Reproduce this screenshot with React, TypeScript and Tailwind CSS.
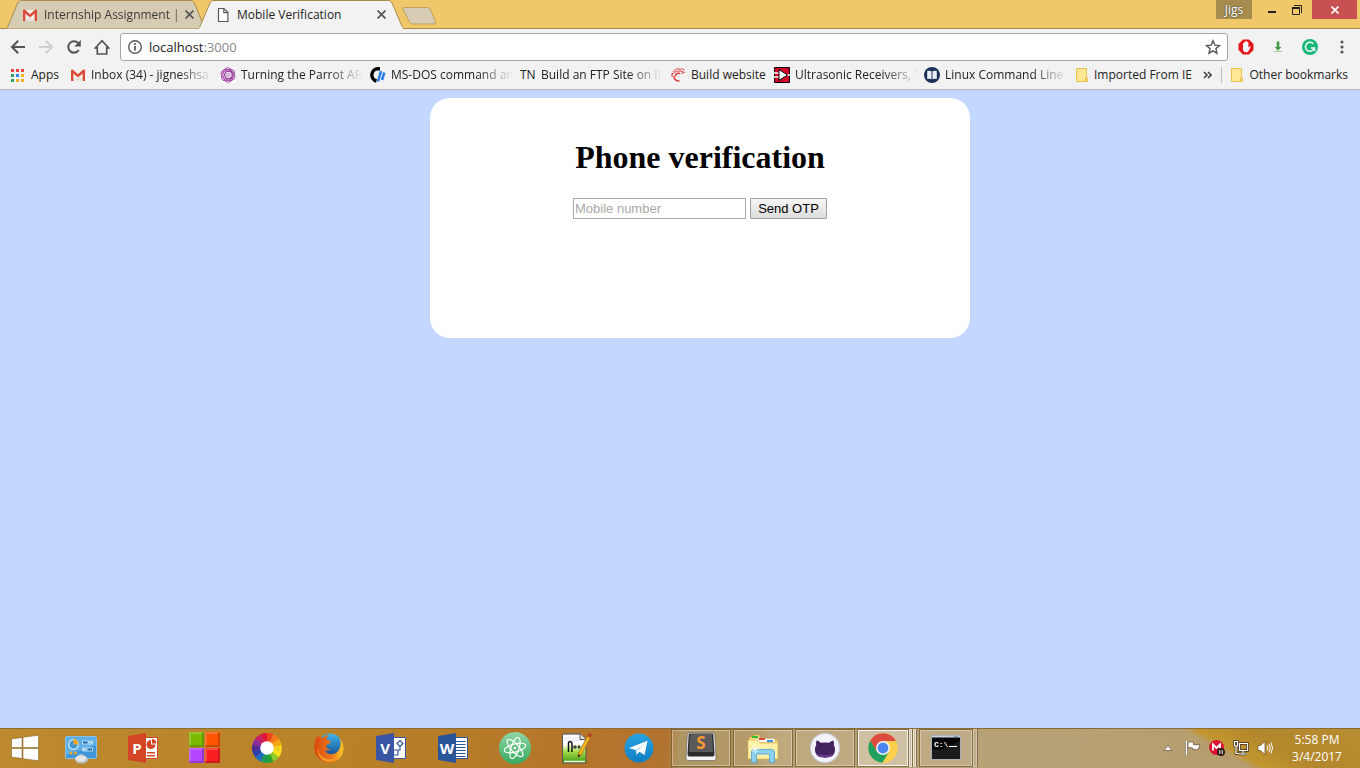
import React from "react";

type IconProps = { className?: string };

/* ---------- shared glyphs ---------- */

function GmailIcon({ className = "size-4" }: IconProps) {
  return (
    <svg viewBox="0 0 16 16" className={className} aria-hidden="true">
      <path d="M2 3h12v11H2z" fill="#f4f0ec" />
      <path d="M1 3.6v10.4h2.4V6.4L8 10.6l4.6-4.2V14H15V3.6c0-1-1.2-1.4-2-.8L8 7.2 3 2.8c-.8-.6-2-.2-2 .8z" fill="#dc4a3a" />
      <path d="M3.4 13.6 8 9.4l4.6 4.2z" fill="#e4ddd8" />
    </svg>
  );
}

function CloseIcon({ className = "size-2" }: IconProps) {
  return (
    <svg viewBox="0 0 8 8" className={className} aria-hidden="true">
      <path d="M.5.5l7 7M7.5.5l-7 7" stroke="currentColor" strokeWidth="1.6" fill="none" />
    </svg>
  );
}

function PageIcon() {
  return (
    <svg viewBox="0 0 16 16" className="size-4" aria-hidden="true">
      <path d="M3.5 1.5h5.4l4 4v9H3.5z" fill="#fff" stroke="#5a5a5a" strokeWidth="1.2" />
      <path d="M8.8 1.5v4.2H13" fill="none" stroke="#5a5a5a" strokeWidth="1.2" />
    </svg>
  );
}

function FolderIcon() {
  return (
    <svg viewBox="0 0 12 14" className="h-[14px] w-3 shrink-0" aria-hidden="true">
      <path d="M.5.5h10v9.5h1v3.5H.5z" fill="#ffe793" stroke="#e9c44c" />
      <path d="M9.5 13.5V10h1.5" fill="none" stroke="#e9c44c" />
    </svg>
  );
}

/* ---------- title bar ---------- */

type TabProps = { title: string; icon: React.ReactNode; active?: boolean };

function Tab({ title, icon, active = false }: TabProps) {
  return (
    <div
      className={
        active
          ? "relative z-10 -ml-2 flex h-[29px] w-[206px] items-center pr-[18px] pl-[17px]"
          : "relative flex h-[29px] w-[200px] items-center pr-3 pl-4"
      }
    >
      <svg viewBox="0 0 206 29" preserveAspectRatio="none" className="absolute inset-0 size-full" aria-hidden="true">
        <path
          d="M0 28.5Q1 28.5 1.500 27.500L12 3C13 1.5 14 .5 16 .5H190C192 .5 193 1.5 194 3L204.500 27.500Q205 28.5 206 28.5"
          fill={active ? "#f2f2f2" : "#d6ccb4"}
          stroke="#a98a4c"
        />
        {active && <path d="M1 28.5H205" stroke="#f2f2f2" strokeWidth="2" />}
      </svg>
      <span className="relative flex min-w-0 flex-1 items-center gap-[6px]">
        {icon}
        <span
          className={
            active
              ? "flex-1 text-xs whitespace-nowrap text-[#222]"
              : "flex-1 overflow-hidden mask-r-from-94% text-xs whitespace-nowrap text-[#3c3a34]"
          }
        >
          {title}
        </span>
      </span>
      <button type="button" aria-label={"Close " + title} className="relative ml-[2px] text-[#5a5a5a]">
        <CloseIcon className="size-[9px]" />
      </button>
    </div>
  );
}

function TitleBar() {
  return (
    <header className="flex h-[29px] items-start border-b border-[#a98a4c] bg-[#f0c869]">
      <div className="flex pl-[6px]">
        <Tab title="Internship Assignment | N" icon={<GmailIcon className="size-4 shrink-0" />} />
        <Tab title="Mobile Verification" icon={<PageIcon />} active />
        <button type="button" aria-label="New tab" className="mt-[7px] -ml-[2px] h-[18px] w-[34px]">
          <svg viewBox="0 0 34 18" className="size-full" aria-hidden="true">
            <path d="M2 .5h23.500q2 0 3 2l5 12.500q.5 2-1.500 2H10.500q-2 0-3-2L1 2.500Q.4.5 2 .5z" fill="#d6ccb4" stroke="#bf9f5c" />
          </svg>
        </button>
      </div>
      <div className="ml-auto flex h-[19px] items-stretch pr-[3px]">
        <button type="button" className="w-9 bg-[#a68d4f] text-xs leading-[18px] text-white [text-shadow:0_0_2px_#333]">
          Jigs
        </button>
        <button type="button" aria-label="Minimize" className="ml-[10px] flex w-5 items-center justify-center pt-1">
          <span className="h-[2px] w-2 bg-[#222]" />
        </button>
        <button type="button" aria-label="Restore" className="flex w-[30px] items-center justify-center">
          <svg viewBox="0 0 10 10" className="size-[10px]" aria-hidden="true">
            <path d="M.5 3h7v6.500h-7z" fill="none" stroke="#222" />
            <path d="M0 3h8" stroke="#222" strokeWidth="2" />
            <path d="M2 .5h7.500V8" fill="none" stroke="#222" />
          </svg>
        </button>
        <button type="button" aria-label="Close window" className="flex w-[45px] items-center justify-center bg-[#c75050] text-white">
          <CloseIcon />
        </button>
      </div>
    </header>
  );
}

/* ---------- toolbar ---------- */

type NavButtonProps = { label: string; d: string; faded?: boolean };

function NavButton({ label, d, faded = false }: NavButtonProps) {
  return (
    <button type="button" aria-label={label} className={faded ? "text-[#cfcfcf]" : "text-[#535353]"}>
      <svg viewBox="0 0 16 16" className="size-4" fill="none" stroke="currentColor" strokeWidth="2" aria-hidden="true">
        <path d={d} />
      </svg>
    </button>
  );
}

function Toolbar() {
  return (
    <div className="flex h-9 items-center bg-[#f2f2f2] pl-[10px]">
      <nav className="flex gap-3" aria-label="Navigation">
        <NavButton label="Back" d="M15 8H2.500M8.200 1.800 2 8l6.200 6.200" />
        <NavButton label="Forward" d="M1 8h12.500M7.800 1.800 14 8l-6.200 6.200" faded />
        <button type="button" aria-label="Reload" className="text-[#535353]">
          <svg viewBox="0 0 16 16" className="size-4" aria-hidden="true">
            <path d="M12.800 11A5.700 5.700 0 1 1 12.500 4.500" fill="none" stroke="currentColor" strokeWidth="2" />
            <path d="M14.800 1v6.500H8.300z" fill="currentColor" />
          </svg>
        </button>
        <button type="button" aria-label="Home" className="text-[#535353]">
          <svg viewBox="0 0 16 16" className="size-4" fill="none" stroke="currentColor" strokeWidth="1.700" aria-hidden="true">
            <path d="M3.300 8.800v6.200h9.400V8.800h1.800L8 1.700 1.500 8.800z" />
          </svg>
        </button>
      </nav>
      <div className="ml-[10px] flex h-7 flex-1 items-center rounded-[3px] border border-[#a6a6a6] bg-white px-[6px]">
        <svg viewBox="0 0 16 16" className="size-4 shrink-0" aria-hidden="true">
          <circle cx="8" cy="8" r="6.300" fill="none" stroke="#5a5a5a" strokeWidth="1.400" />
          <path d="M8 7v4.500M8 4.200v1.800" stroke="#5a5a5a" strokeWidth="1.800" />
        </svg>
        <div className="ml-[6px] flex-1 text-[13px] leading-5 text-[#222]">
          localhost<span className="text-[#888]">:3000</span>
        </div>
        <button type="button" aria-label="Bookmark this page">
          <svg viewBox="0 0 16 16" className="size-4" aria-hidden="true">
            <path d="M8 1.800l1.800 4.300 4.700.4-3.600 3.100 1.100 4.600L8 11.800l-4 2.400 1.100-4.600L1.500 6.500l4.700-.4z" fill="none" stroke="#5a5a5a" strokeWidth="1.400" />
          </svg>
        </button>
      </div>
      <div className="flex items-center gap-4 pr-[10px] pl-[10px]">
        <button type="button" aria-label="Ad blocker">
          <svg viewBox="0 0 16 16" className="size-4" aria-hidden="true">
            <path d="M5 .5h6L15.500 5v6L11 15.500H5L.5 11V5z" fill="#e4151c" />
            <path d="M5 8V4.200q.7-.9 1.300 0V3q.7-.9 1.400 0v-.7q.7-.8 1.400 0V3.500q.7-.8 1.300 0V8.700l1.300-1.500q1.200-.3.900.8L10.400 12.300Q9.500 13.500 7.700 13.300 5 13 5 10z" fill="#fff" />
          </svg>
        </button>
        <button type="button" aria-label="Downloads">
          <svg viewBox="0 0 16 16" className="size-4" aria-hidden="true">
            <path d="M6.700 2.500h2.600V8h2L8 11.700 4.700 8h2z" fill="#449a44" />
            <path d="M4 12.500h8" stroke="#9fc99f" />
          </svg>
        </button>
        <button type="button" aria-label="Grammar check">
          <svg viewBox="0 0 16 16" className="size-4" aria-hidden="true">
            <circle cx="8" cy="8" r="8" fill="#15b877" />
            <path d="M11.300 4.800A4.500 4.500 0 1 0 12.300 9" fill="none" stroke="#fff" strokeWidth="1.500" />
            <path d="M8.800 9h3.700v3.200" fill="none" stroke="#fff" strokeWidth="1.500" />
          </svg>
        </button>
        <button type="button" aria-label="Menu">
          <svg viewBox="0 0 16 16" className="size-4 text-[#5a5a5a]" fill="currentColor" aria-hidden="true">
            <circle cx="8" cy="3" r="1.600" />
            <circle cx="8" cy="8" r="1.600" />
            <circle cx="8" cy="13" r="1.600" />
          </svg>
        </button>
      </div>
    </div>
  );
}

/* ---------- bookmarks bar ---------- */

function AppsIcon() {
  const colors = ["#e8453c", "#e8453c", "#e8453c", "#2fa25c", "#2f86f5", "#f6b221", "#2fa25c", "#f6b221", "#f6b221"];
  return (
    <svg viewBox="0 0 16 16" className="size-4 shrink-0" aria-hidden="true">
      {colors.map((c, i) => (
        <rect key={i} x={2 + (i % 3) * 5} y={2 + Math.floor(i / 3) * 5} width="3" height="3" fill={c} />
      ))}
    </svg>
  );
}

function SpiralIcon() {
  return (
    <svg viewBox="0 0 16 16" className="size-4 shrink-0" fill="none" stroke="#a64fa9" aria-hidden="true">
      <path d="M0 0h16v16H0z" fill="#fff" stroke="none" />
      <ellipse cx="8" cy="8" rx="7.300" ry="5" transform="rotate(25 8 8)" />
      <ellipse cx="8" cy="8" rx="7.300" ry="5" transform="rotate(85 8 8)" />
      <ellipse cx="8" cy="8" rx="7.300" ry="5" transform="rotate(145 8 8)" />
      <circle cx="8.500" cy="8" r="3.800" stroke="#8d2f92" strokeWidth="1.300" />
      <circle cx="8.500" cy="8" r="2.800" fill="#dcb8de" stroke="none" />
    </svg>
  );
}

function ComputerHopeIcon() {
  return (
    <svg viewBox="0 0 16 16" className="size-4 shrink-0" aria-hidden="true">
      <path d="M10 1.800H8A6.200 6.200 0 0 0 6.500 14" fill="none" stroke="#000" strokeWidth="3.400" />
      <path d="M11 4 8 14.500M14.300 5.500 12 13" fill="none" stroke="#2f7fe8" strokeWidth="2.600" />
    </svg>
  );
}

function TnIcon() {
  return <span className="w-4 shrink-0 text-xs whitespace-nowrap text-[#222]">TN</span>;
}

function SwirlIcon() {
  return (
    <svg viewBox="0 0 16 16" className="size-4 shrink-0" fill="none" stroke="#df3b3b" aria-hidden="true">
      <path d="M3 5C5 2 8 1 11 2.500M2 10C1.500 7 5 4 9 4c3 0 5 .5 5.500 2" />
      <path d="M10 6.500C7 5.500 5 7.500 5.500 9.500M4 9c-.5 3 2 5 5.500 5" strokeWidth="1.500" />
      <path d="M1 7.500l2-1.500M11.500 1.500l3 1.500M11 6.500l3-1" />
    </svg>
  );
}

function CircuitIcon() {
  return (
    <svg viewBox="0 0 16 16" className="size-4 shrink-0" aria-hidden="true">
      <path d="M.5.5h15v15H.5z" fill="#d2092b" stroke="#000" />
      <path d="M0 6h5M0 10h5M12 8h4" stroke="#fff" strokeWidth="1.500" />
      <path d="M5 2.500v11L13.500 8z" fill="#fff" stroke="#000" />
    </svg>
  );
}

function BookIcon() {
  return (
    <svg viewBox="0 0 16 16" className="size-4 shrink-0" aria-hidden="true">
      <circle cx="8" cy="8" r="8" fill="#1b3158" />
      <path d="M3.200 4Q6 3.200 7.500 4.300v7.900Q6 11.200 3.200 12zM12.800 4Q10 3.200 8.500 4.300v7.900Q10 11.200 12.800 12z" fill="#e9edf4" />
    </svg>
  );
}

const bookmarks: { label: string; icon: React.ReactNode; fade: boolean }[] = [
  { label: "Inbox (34) - jigneshsa", icon: <GmailIcon className="size-4 shrink-0" />, fade: true },
  { label: "Turning the Parrot AR", icon: <SpiralIcon />, fade: true },
  { label: "MS-DOS command an", icon: <ComputerHopeIcon />, fade: true },
  { label: "Build an FTP Site on II", icon: <TnIcon />, fade: true },
  { label: "Build website", icon: <SwirlIcon />, fade: false },
  { label: "Ultrasonic Receivers, T", icon: <CircuitIcon />, fade: true },
  { label: "Linux Command Line", icon: <BookIcon />, fade: true },
];

function BookmarksBar() {
  return (
    <nav
      aria-label="Bookmarks"
      className="flex h-[25px] items-center border-b border-[#b6b6b6] bg-[#f2f2f2] pr-3 pb-[5px] pl-[9px] text-xs leading-4 whitespace-nowrap text-[#222]"
    >
      <a href="#apps" className="flex w-[61px] shrink-0 items-center gap-[6px]">
        <AppsIcon />
        Apps
      </a>
      <div className="flex gap-[5px]">
        {bookmarks.map((b) => (
          <a
            key={b.label}
            href="#bookmark"
            className={b.fade ? "flex w-[145px] items-center gap-[5px]" : "flex w-[99px] items-center gap-[5px]"}
          >
            {b.icon}
            <span className={b.fade ? "flex-1 mask-r-from-70% mask-r-to-98%" : ""}>{b.label}</span>
          </a>
        ))}
      </div>
      <a href="#imported" className="ml-[7px] flex items-center gap-[6px]">
        <FolderIcon />
        Imported From IE
      </a>
      <div className="ml-auto flex items-center">
        <button type="button" aria-label="More bookmarks">
          <svg viewBox="0 0 9 8" className="h-2 w-[9px]" fill="none" stroke="#444" strokeWidth="1.600" aria-hidden="true">
            <path d="M1 1l3 3-3 3M5 1l3 3-3 3" />
          </svg>
        </button>
        <span className="mx-[9px] h-4 w-px bg-[#bdbdbd]" />
        <a href="#other" className="flex items-center gap-[6px]">
          <FolderIcon />
          Other bookmarks
        </a>
      </div>
    </nav>
  );
}

/* ---------- page ---------- */

function VerificationPage() {
  return (
    <main className="flex flex-1 items-start justify-center bg-[#c4d8ff] pt-2 pl-10">
      <section className="min-h-60 w-full max-w-[540px] rounded-[20px] bg-white pt-[41px] text-center">
        <h1 className="font-['Liberation_Serif',serif] text-[32px] leading-[37px] font-bold text-black">Phone verification</h1>
        <form
          className="mt-[22px] flex items-center justify-center gap-1 font-['Liberation_Sans',sans-serif] text-[13px] leading-4"
          onSubmit={(e) => e.preventDefault()}
        >
          <input
            type="tel"
            aria-label="Mobile number"
            placeholder="Mobile number"
            className="h-[21px] w-[173px] border border-[#a9a9a9] bg-white px-px text-black placeholder:text-[#a9a9a9]"
          />
          <button
            type="submit"
            className="h-[21px] w-[77px] rounded-[1px] border border-[#a0a0a0] bg-linear-to-b from-[#f6f6f6] to-[#dddddd] text-black"
          >
            Send OTP
          </button>
        </form>
      </section>
    </main>
  );
}

/* ---------- taskbar ---------- */

const iconClass = "size-8 shrink-0";

function ControlPanelIcon() {
  return (
    <svg viewBox="0 0 32 32" className={iconClass} aria-hidden="true">
      <rect x=".5" y="4.500" width="31" height="22" rx="1.500" fill="#3f97d8" stroke="#86c2e8" />
      <path d="M1 5h30v8L1 23z" fill="#5eafe5" />
      <circle cx="8.500" cy="12.500" r="4.800" fill="#3f97d8" stroke="#d8efff" strokeWidth="1.200" />
      <path d="M8.500 12.500V6.500a6 6 0 0 1 5 6z" fill="#f7a823" />
      <path d="M17.500 9h10v3h-10zM17.500 16h10v3h-10z" fill="#1e6cab" stroke="#d8efff" strokeWidth=".8" />
      <path d="M22.500 9.500h4.500v2h-4.500zM18 16.500h4.500v2H18z" fill="#bfe8ff" />
      <circle cx="6" cy="21" r="1.500" fill="#f7a823" />
      <circle cx="10.500" cy="21" r="1.500" fill="#f7a823" />
      <ellipse cx="16.500" cy="27.500" rx="6.500" ry="4.300" fill="#b9babd" />
      <ellipse cx="16" cy="26.500" rx="5.500" ry="3.200" fill="#e6e6e8" />
      <path d="M14 22.500h4v2h-4z" fill="#d8d8da" />
    </svg>
  );
}

function OfficeIcon({ letter, color, children }: { letter: string; color: string; children: React.ReactNode }) {
  return (
    <svg viewBox="0 0 32 32" className={iconClass} aria-hidden="true">
      <path d="M17 5.500h13.500v21H17z" fill="#fff" stroke={color} />
      {children}
      <path d="M1 4 19 1v30L1 28z" fill={color} />
      <text x="10" y="21.500" textAnchor="middle" fontSize="15" fontWeight="700" fill="#fff" fontFamily="Open Sans, sans-serif">
        {letter}
      </text>
    </svg>
  );
}

function TilesIcon() {
  return (
    <svg viewBox="0 0 32 32" className={iconClass} aria-hidden="true">
      <path d="M0 0h15v15H0z" fill="#7cb900" />
      <path d="M16 0h15v15H16z" fill="#fc5400" />
      <path d="M0 16h15v15H0z" fill="#b446ff" />
      <path d="M16 16h15v15H16z" fill="#fa2020" />
      <path d="M14 1v13H1M30 1v13H17M14 17v13H1M30 17v13H17" fill="none" stroke="#000" strokeOpacity=".18" strokeWidth="2" />
      <path d="M1 13V1h12M17 13V1h12M1 29V17h12M17 29V17h12" fill="none" stroke="#fff" strokeOpacity=".18" strokeWidth="2" />
    </svg>
  );
}

const wheelColors = [
  "#f0441e", "#f77b1c", "#f9a51c", "#f7d21a", "#f3e41c", "#8ccc26",
  "#23a536", "#1f9a5c", "#1c6fc4", "#2a3fae", "#4b2a9c", "#8a2a9c", "#c41f6c", "#e2143c",
];

function ColorWheelIcon() {
  const n = wheelColors.length;
  const point = (i: number) => {
    const a = (i / n) * Math.PI * 2 - Math.PI / 2;
    return (16 + 15 * Math.cos(a)).toFixed(2) + " " + (16 + 15 * Math.sin(a)).toFixed(2);
  };
  return (
    <svg viewBox="0 0 32 32" className={iconClass} aria-hidden="true">
      {wheelColors.map((c, i) => (
        <path key={c} d={"M16 16L" + point(i) + "A15 15 0 0 1 " + point(i + 1) + "Z"} fill={c} />
      ))}
      <circle cx="16" cy="16" r="6.800" fill="#fff" />
    </svg>
  );
}

function FirefoxIcon() {
  return (
    <svg viewBox="0 0 32 32" className={iconClass} aria-hidden="true">
      <defs>
        <linearGradient id="foxGlobe" x1="0" y1="0" x2="0" y2="1">
          <stop offset="0" stopColor="#3fb4e8" />
          <stop offset="1" stopColor="#14418c" />
        </linearGradient>
        <linearGradient id="foxTail" x1="0" y1="0" x2="1" y2="0">
          <stop offset="0" stopColor="#d9480f" />
          <stop offset=".6" stopColor="#f07a1a" />
          <stop offset="1" stopColor="#fbc82a" />
        </linearGradient>
      </defs>
      <circle cx="17" cy="14" r="12.500" fill="url(#foxGlobe)" />
      <path
        d="M3.500 5C2 8 1 13 1.300 17c.7 8 7 13.700 14.700 13.700 8.500 0 14.500-6.500 14.500-14.500 0-4-1.500-7.500-3.700-9.700 1 4 1.200 7-.5 10.500-2 4.500-7.500 6.500-11.500 4.500-1.500-.8-2.500-2-2.600-3.300 1.800.8 3.500.3 5.300-.8-3-.2-4.500-1.700-4-3.900.2-1.500 3.500-1.500 4.200-3.500-.7-1.500-3-1.700-4-2.500.2-2 1-3.500 2.500-4.500-2.500-.2-4.700.8-6.200 2.700C7 5 5 4 3.500 5z"
        fill="url(#foxTail)"
      />
      <path d="M5 13q-1 9 6 13 8 4 15-2-6 7-14 5-9-4-7-16z" fill="#f7a02a" />
    </svg>
  );
}

function AtomIcon() {
  return (
    <svg viewBox="0 0 32 32" className={iconClass} aria-hidden="true">
      <defs>
        <linearGradient id="atomFill" x1="0" y1="0" x2="0" y2="1">
          <stop offset="0" stopColor="#8fd6a5" />
          <stop offset="1" stopColor="#35a95f" />
        </linearGradient>
      </defs>
      <circle cx="16" cy="16" r="16" fill="url(#atomFill)" />
      <g fill="none" stroke="#fff" strokeWidth="1.200">
        <ellipse cx="16" cy="16" rx="11" ry="4" transform="rotate(-15 16 16)" />
        <ellipse cx="16" cy="16" rx="11" ry="4" transform="rotate(48 16 16)" />
        <ellipse cx="16" cy="16" rx="11" ry="4" transform="rotate(108 16 16)" />
      </g>
      <circle cx="16" cy="16" r="1.300" fill="#fff" />
    </svg>
  );
}

function NotepadIcon() {
  return (
    <svg viewBox="0 0 32 32" className={iconClass} aria-hidden="true">
      <defs>
        <linearGradient id="noteFill" x1="0" y1="0" x2="0" y2="1">
          <stop offset=".35" stopColor="#fff" />
          <stop offset=".6" stopColor="#a6df4c" />
          <stop offset="1" stopColor="#3f9a12" />
        </linearGradient>
      </defs>
      <path d="M1.500 2h18l5.500 5v24H1.500z" fill="url(#noteFill)" stroke="#555" />
      <path d="M3 29.500h21" stroke="#eef8e0" strokeWidth="1.500" />
      <path d="M19 2v5.500h6" fill="#ddd" stroke="#555" />
      <path d="M3 1.500h16" stroke="#777" strokeWidth="2" strokeDasharray="1 1" />
      <path d="M4 6h13M4 8.500h18" stroke="#c8d4e4" strokeWidth=".6" />
      <path d="M7.500 20v-9q0-1.500 2-1.200 1.500.2 1.500 2V20" fill="none" stroke="#111" strokeWidth="1.500" />
      <path d="M12 15h4M14 13v4M16.500 15h3M18 13v4" stroke="#111" />
      <path d="M17.500 21 26.500 4l3 1.500-9 17-3.500 3z" fill="#f5b71e" stroke="#9a6510" strokeWidth=".7" />
      <path d="M26.500 4 28 .8l3.200 1.700L29.500 5.500z" fill="#b5432a" />
      <path d="M17.500 22 17 25.500l2.500-2z" fill="#222" />
    </svg>
  );
}

function TelegramIcon() {
  return (
    <svg viewBox="0 0 32 32" className={iconClass} aria-hidden="true">
      <defs>
        <linearGradient id="planeFill" x1="0" y1="0" x2="0" y2="1">
          <stop offset="0" stopColor="#2ba3e0" />
          <stop offset="1" stopColor="#0f7fc4" />
        </linearGradient>
      </defs>
      <circle cx="16" cy="16" r="14.500" fill="url(#planeFill)" />
      <path d="M6 16 24.500 8.700 21.500 23 16.500 19.700 13.500 22.800 12.700 18z" fill="#fff" />
      <path d="M12.700 18 21.500 11.500 14.500 18.800 13.500 22.800z" fill="#b9d9ec" />
    </svg>
  );
}

function SublimeIcon() {
  return (
    <svg viewBox="0 0 32 32" className={iconClass} aria-hidden="true">
      <path d="M4 .8h24q1.500 0 1.700 1.700L31 26q0 2.500-2 2.500H3q-2 0-2-2.500L2.300 2.500Q2.500.8 4 .8z" fill="#f4f4f4" stroke="#555" strokeWidth=".6" />
      <path d="M5 1.500h22q1 0 1.300 1L29.500 22q0 2.500-1.500 2.500H4Q2.500 24.500 2.500 22L3.700 2.500q.3-1 1.300-1z" fill="#2c2c2c" />
      <path d="M6 2h20q.8 0 1 1l1 15.500q0 1.500-1 1.500H5q-1 0-1-1.500L5 3q.2-1 1-1z" fill="#5a5a5a" />
      <text x="16" y="17" textAnchor="middle" fontSize="17" fontWeight="700" fill="#f99a35" fontFamily="Open Sans, sans-serif">
        S
      </text>
    </svg>
  );
}

function ExplorerIcon() {
  return (
    <svg viewBox="0 0 32 32" className={iconClass} aria-hidden="true">
      <path d="M2 5h4l1-2h6v4l18 1v18l-29 1z" fill="#f4da7a" stroke="#c69a34" strokeWidth=".6" />
      <path d="M5 4h6v2H5z" fill="#2fbf3a" />
      <path d="M8 6.500h20v4H8z" fill="#fff" stroke="#cfae55" strokeWidth=".6" />
      <path d="M12 6h6v2h-6z" fill="#d94a3a" />
      <path d="M20 8h6v2h-6z" fill="#3c8fdc" />
      <path d="M1 8h10l2 3h18v16H1z" fill="#fdf0a8" stroke="#d9b04a" strokeWidth=".6" />
      <path d="M4.500 30.500V20q0-2.500 3-2.500h17q3 0 3 2.500v10.500h-5V23q0-1-1.500-1h-10q-1.500 0-1.500 1v7.500z" fill="#8cd0f0" stroke="#4b9ecb" strokeWidth=".8" />
      <path d="M8 12.500v9M3.500 17h9M5 14l6 6M11 14l-6 6" stroke="#fff" strokeWidth=".8" />
    </svg>
  );
}

function GithubIcon() {
  return (
    <svg viewBox="0 0 32 32" className={iconClass} aria-hidden="true">
      <circle cx="16" cy="16" r="14.700" fill="#f2f2fa" stroke="#c6c6dc" />
      <path
        d="M7.500 8.700Q8.300 8 11.800 10.800 16 10 20.200 10.800 23.700 8 24.500 8.700 25.300 11 24.800 13.300 26.800 16 25.600 20.500 24 25.700 16 25.700T6.400 20.500Q5.200 16 7.200 13.300 6.700 11 7.500 8.700z"
        fill="#43225f"
      />
      <path d="M7 21q2 4.300 9 4.300t9-4.300q-3 2-9 2t-9-2z" fill="#643a86" />
    </svg>
  );
}

function ChromeIcon() {
  return (
    <svg viewBox="0 0 32 32" className={iconClass} aria-hidden="true">
      <circle cx="16" cy="16" r="14.700" fill="#fdd04c" />
      <path d="M3.300 8.600A14.700 14.700 0 0 0 15.500 30.700L22 19.500 10 19.500z" fill="#1fa15d" />
      <path d="M3.300 8.600 9.900 19.500 10 12.500 16 9h12.900A14.700 14.700 0 0 0 3.300 8.600z" fill="#dc4c3f" />
      <circle cx="16" cy="16" r="7" fill="#f4f4f4" />
      <circle cx="16" cy="16" r="5.400" fill="#4a84ee" />
    </svg>
  );
}

function ConsoleIcon() {
  return (
    <svg viewBox="0 0 32 32" className={iconClass} aria-hidden="true">
      <path d="M1.500 3.500h29v24h-29z" fill="#050505" stroke="#a9b2bb" />
      <path d="M2 4h28v1.500H2z" fill="#c9d3df" />
      <path d="M24 4.700h1.500M26.500 4.700H28" stroke="#4d6d9a" />
      <path d="M2 27V18Q16 19 30 8v19z" fill="#1c1c1c" />
      <text x="4" y="15" fontSize="8" fontWeight="700" fill="#fff" fontFamily="Liberation Mono, monospace">
        C:\
      </text>
      <path d="M19 14.500h8" stroke="#fff" />
    </svg>
  );
}

const launchers: { name: string; icon: React.ReactNode }[] = [
  { name: "Control Panel", icon: <ControlPanelIcon /> },
  {
    name: "PowerPoint",
    icon: (
      <OfficeIcon letter="P" color="#d24625">
        <path d="M24 8a4.500 4.500 0 1 0 4.500 4.500H24z" fill="#d24625" />
        <path d="M25 7v4.500h4.300A4.500 4.500 0 0 0 25 7zM20 20h8v1.500h-8zM20 23h8v1.500h-8z" fill="#d24625" />
      </OfficeIcon>
    ),
  },
  { name: "Tiles", icon: <TilesIcon /> },
  { name: "Color wheel", icon: <ColorWheelIcon /> },
  { name: "Firefox", icon: <FirefoxIcon /> },
  {
    name: "Visio",
    icon: (
      <OfficeIcon letter="V" color="#3955a3">
        <path d="M25 8.500l3 3-3 3-3-3zM25 14.500V18h-4M19 18h4v5h-4" fill="none" stroke="#3955a3" strokeWidth="1.200" />
      </OfficeIcon>
    ),
  },
  {
    name: "Word",
    icon: (
      <OfficeIcon letter="W" color="#2a5699">
        <path d="M19 9.500h9.500M19 12.500h9.500M19 15.500h9.500M19 18.500h9.500M19 21.500h9.500M19 24.500h9.500" stroke="#2a5699" strokeWidth="1.200" />
      </OfficeIcon>
    ),
  },
  { name: "Atom", icon: <AtomIcon /> },
  { name: "Notepad++", icon: <NotepadIcon /> },
  { name: "Telegram", icon: <TelegramIcon /> },
];

const windowsOpen: { name: string; icon: React.ReactNode }[] = [
  { name: "Sublime Text", icon: <SublimeIcon /> },
  { name: "File Explorer", icon: <ExplorerIcon /> },
  { name: "GitHub", icon: <GithubIcon /> },
];

function Tray() {
  return (
    <div className="ml-auto flex items-center gap-2 pr-[15px]">
      <button type="button" aria-label="Show hidden icons" className="mr-1">
        <svg viewBox="0 0 10 6" className="h-[6px] w-[10px]" aria-hidden="true">
          <path d="M5 .5l4 5H1z" fill="#fff" stroke="#6b5a38" strokeWidth=".7" />
        </svg>
      </button>
      <svg viewBox="0 0 16 16" className="size-4" aria-hidden="true">
        <path d="M1.500 1v14.500" stroke="#5b4a2c" strokeWidth="3" />
        <path d="M1.500 1v14.500" stroke="#fff" strokeWidth="1.800" />
        <path d="M3 2.500q3-1.500 5.500 0v2q3 1 6.500-.5l-1.500 5q-3 1.200-6 0V8Q5.500 7 3 8z" fill="#fff" stroke="#5b4a2c" strokeWidth=".7" />
      </svg>
      <svg viewBox="0 0 16 16" className="size-4" aria-hidden="true">
        <circle cx="7.500" cy="7.500" r="7.500" fill="#dc1434" />
        <path d="M4 10.500v-6l3.500 3.500L11 4.500v6" fill="none" stroke="#fff" strokeWidth="1.800" />
        <circle cx="12" cy="12" r="4" fill="#2b1a12" />
        <path d="M10.800 10v4M13.200 10v4" stroke="#fff" />
      </svg>
      <svg viewBox="0 0 16 16" className="size-4" fill="none" aria-hidden="true">
        <path d="M6.500 3.500h8v7h-8zM10 10.500v3M6 14h8M3 6v7.500h3M1.500 1.500h3V6h-3z" stroke="#3d3018" strokeWidth="2.600" />
        <path d="M6.500 3.500h8v7h-8zM10 10.500v3M6 14h8M3 6v7.500h3M1.500 1.500h3V6h-3z" stroke="#fff" strokeWidth="1.200" />
      </svg>
      <svg viewBox="0 0 16 16" className="size-4" aria-hidden="true">
        <path d="M1 5.500h2.500L8 1.500v13l-4.500-4H1z" fill="#fff" stroke="#5b4a2c" strokeWidth=".7" />
        <path d="M10 5.500q1.500 2.500 0 5M12 4q2.500 4 0 8M14 2.500q3 5.500 0 11" fill="none" stroke="#fff" />
      </svg>
      <time className="ml-2 w-14 text-center text-xs leading-[17px] whitespace-nowrap text-white">
        5:58 PM
        <br />
        3/4/2017
      </time>
    </div>
  );
}

function Taskbar() {
  return (
    <footer className="flex h-10 items-stretch border-t border-[#8c6a34] bg-[linear-gradient(29deg,transparent_87.5%,#c2962e_88.5%,#b3872c_92%,#b88c30_100%),linear-gradient(95deg,#bd892f_0%,#b88228_25%,#b5742a_44%,#b27330_49%,#a48a50_50%,#ab9058_55%,#b79f70_57%,#b7a278_75%,#b49a66_100%)] pb-px">
      <button type="button" aria-label="Start" className="flex w-[50px] items-center justify-center">
        <svg viewBox="0 0 28 26" className="h-[26px] w-7" aria-hidden="true">
          <path d="M.5 4 11 2.500V12.500H.5zM12 2.300 27.500.3V12.500H12zM.5 13.500H11V23.500L.5 22zM12 13.500H27.500V25.700L12 23.700z" fill="#fff" stroke="#7d5a1d" strokeWidth=".5" />
        </svg>
      </button>
      <div className="flex">
        {launchers.map((l) => (
          <button key={l.name} type="button" aria-label={l.name} className="flex w-[62px] items-center justify-center">
            {l.icon}
          </button>
        ))}
      </div>
      <div className="ml-px flex gap-[2px]">
        {windowsOpen.map((w) => (
          <button
            key={w.name}
            type="button"
            aria-label={w.name}
            className="flex w-[60px] items-center justify-center border border-[#6f5b32]/80 bg-white/10 inset-ring inset-ring-white/35"
          >
            {w.icon}
          </button>
        ))}
        <div className="flex">
          <button
            type="button"
            aria-label="Chrome"
            className="flex w-[52px] items-center justify-center border border-[#6f5b32]/80 bg-white/35 inset-ring inset-ring-white/80"
          >
            <ChromeIcon />
          </button>
          <span className="w-1 border-r border-[#6f5b32]/80 bg-white/30 inset-ring inset-ring-white/60" />
          <span className="w-1 border-r border-[#6f5b32]/80 bg-white/30 inset-ring inset-ring-white/60" />
        </div>
        <div className="flex">
          <button
            type="button"
            aria-label="Command Prompt"
            className="flex w-[54px] items-center justify-center border border-[#6f5b32]/80 bg-white/10 inset-ring inset-ring-white/35"
          >
            <ConsoleIcon />
          </button>
          <span className="w-[5px] border-r border-[#6f5b32]/80 bg-white/10 inset-ring inset-ring-white/35" />
        </div>
      </div>
      <Tray />
    </footer>
  );
}

export default function App() {
  return (
    <div className="flex min-h-screen flex-col font-['Open_Sans','Noto_Sans',sans-serif]">
      <TitleBar />
      <Toolbar />
      <BookmarksBar />
      <VerificationPage />
      <Taskbar />
    </div>
  );
}
